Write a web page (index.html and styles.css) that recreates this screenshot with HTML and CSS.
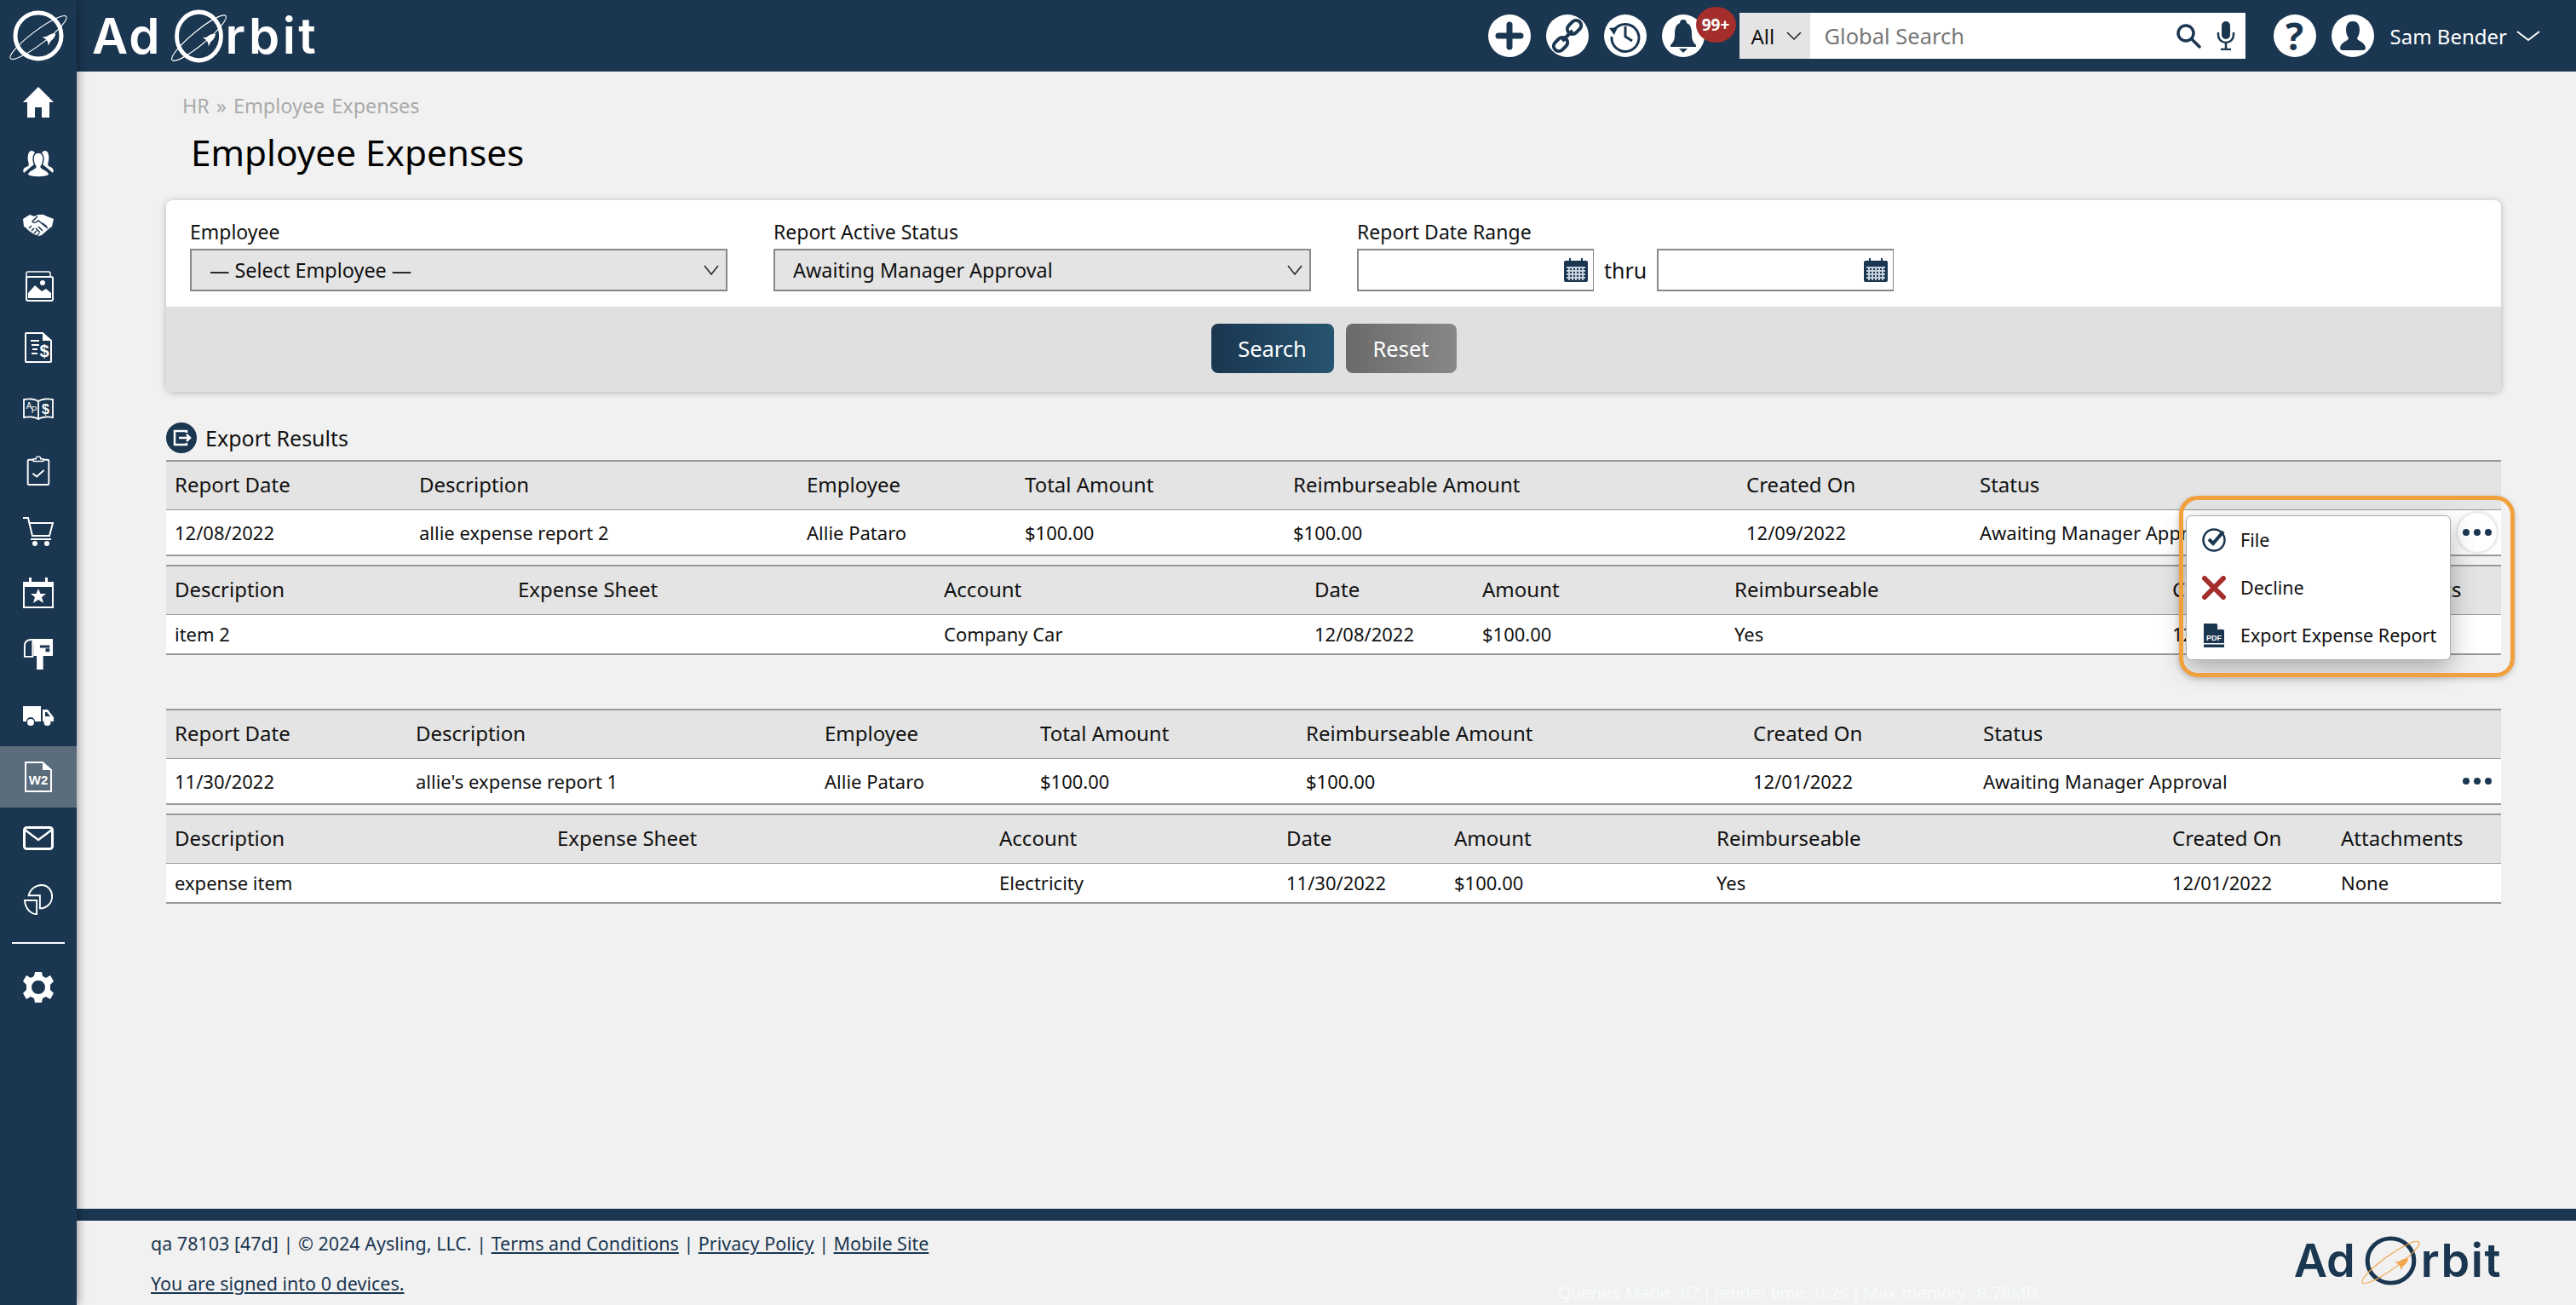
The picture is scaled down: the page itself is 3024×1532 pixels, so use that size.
FILE: index.html
```html
<!DOCTYPE html>
<html lang="en">
<head>
    <meta charset="UTF-8">
    <title>Employee Expenses</title>
    <link rel="stylesheet" href="styles.css">
</head>
<body>
    <svg class="sprite" aria-hidden="true">
        <symbol id="orbit" viewBox="0 0 80 64" preserveAspectRatio="none">
            <circle class="ring" cx="40" cy="32" r="27"/>
            <ellipse class="orbit-line" cx="40" cy="34" rx="41" ry="8" transform="rotate(-37 40 34)"/>
            <g class="orbit-rocket" transform="translate(53 35) rotate(53)">
                <path d="M0 -9C4 -5 4 0 3 4L-3 4C-4 0 -4 -5 0 -9Z"/>
                <path d="M-3 0L-6 6L-2 4ZM3 0L6 6L2 4Z"/>
            </g>
        </symbol>
        <symbol id="calendar" viewBox="0 0 28 28">
            <rect x="6" y="0" width="2" height="6" fill="#1a3650"/>
            <rect x="20" y="0" width="2" height="6" fill="#1a3650"/>
            <rect x="0" y="3" width="28" height="25" rx="2" fill="#1a3650"/>
            <path d="M3 11H25M3 15H25M3 19H25M3 23H25M6 10V26M10 10V26M14 10V26M18 10V26M22 10V26" stroke="#c4d0da" stroke-width="2"/>
        </symbol>
    </svg>

    <aside class="sidebar">
        <div class="side-logo">
            <svg class="logo-mark" width="80" height="64"><use href="#orbit"/></svg>
        </div>
        <nav class="side-nav">
            <a class="nav-item">
                <svg viewBox="0 0 36 36" class="nav-icon"><path fill="#fff" d="M18 0L36 18H31V36H22V24H14V36H5V18H0Z"/></svg>
            </a>
            <a class="nav-item">
                <svg viewBox="0 0 36 32" class="nav-icon">
                    <path fill="#fff" d="M10 1C14 1 15 5 15 9C15 13 13 15 13 17L8 21L1 27C-1 23 1 21 6 19C7 18 7 16 6 13C5 8 6 1 10 1Z"/>
                    <path fill="#fff" d="M26 1C22 1 21 5 21 9C21 13 23 15 23 17L28 21L35 27C37 23 35 21 30 19C29 18 29 16 30 13C31 8 30 1 26 1Z"/>
                    <path fill="#fff" stroke="#1a3650" stroke-width="1.500" d="M18 3C23 3 24 8 24 11C24 15 22 18 21 20C22 23 30 23 31 29C29 31 24 32 18 32C12 32 7 31 5 29C6 23 14 23 15 20C14 18 12 15 12 11C12 8 13 3 18 3Z"/>
                </svg>
            </a>
            <a class="nav-item">
                <svg viewBox="0 0 36 26" class="nav-icon">
                    <path fill="#fff" d="M0 6L8 1L13 3L18 1L24 1L28 3L36 6L34 15L31 17L22 25L19 26L16 25L13 24L10 22L7 20L3 16L1 15Z"/>
                    <path fill="none" stroke="#1a3650" stroke-width="1.500" d="M17 3L11 9C12 11 15 11 18 8L29 17M7 17L10 14M10 20L13 17M13 23L16 20M17 25L19 23M23 11L28 15M18 15L23 20M15 17L20 22"/>
                </svg>
            </a>
            <a class="nav-item">
                <svg viewBox="0 0 36 36" class="nav-icon">
                    <path fill="none" stroke="#fff" stroke-width="1.500" d="M4 26V3C4 2 5 1 6 1H30C31 1 32 2 32 3V6"/>
                    <rect x="4" y="7" width="31" height="28" rx="2" fill="#1a3650" stroke="#fff" stroke-width="2"/>
                    <path fill="#fff" d="M6 32V26L14 17L22 24L27 21L33 26V32Z"/>
                    <circle cx="23" cy="14" r="3" fill="#fff"/>
                </svg>
            </a>
            <a class="nav-item">
                <svg viewBox="0 0 32 36" class="nav-icon">
                    <path fill="none" stroke="#fff" stroke-width="2" d="M2 1H21L31 10V34C31 34.500 30.500 35 30 35H2C1.500 35 1 34.500 1 34V2C1 1.500 1.500 1 2 1Z"/>
                    <path fill="#fff" d="M21 1L31 10H21Z"/>
                    <path stroke="#fff" stroke-width="2" d="M7 10H17M8 15H17M9 20H15M8 25H15"/>
                    <text x="23" y="29" class="nav-glyph nav-dollar">$</text>
                </svg>
            </a>
            <a class="nav-item">
                <svg viewBox="0 0 36 26" class="nav-icon">
                    <path fill="none" stroke="#fff" stroke-width="1.800" d="M18 4C14 1 6 1 1 2V23C6 22 14 22 18 25C22 22 30 22 35 23V2C30 1 22 1 18 4ZM18 4V25"/>
                    <text x="7" y="13" class="nav-glyph nav-small">A</text>
                    <text x="13" y="18" class="nav-glyph nav-small">P</text>
                    <text x="26.500" y="19" class="nav-glyph nav-money">$</text>
                </svg>
            </a>
            <a class="nav-item">
                <svg viewBox="0 0 28 38" class="nav-icon">
                    <rect x="1" y="6" width="26" height="31" rx="1.500" fill="none" stroke="#fff" stroke-width="2"/>
                    <path fill="#1a3650" stroke="#fff" stroke-width="1.500" d="M8 8V5H11C11 1 17 1 17 5H20V8Z"/>
                    <path fill="none" stroke="#fff" stroke-width="2" d="M7 23L12 27L21 19"/>
                </svg>
            </a>
            <a class="nav-item">
                <svg viewBox="0 0 36 34" class="nav-icon">
                    <path fill="none" stroke="#fff" stroke-width="2" d="M0 1H6L11 22H31L35 7H8"/>
                    <path fill="none" stroke="#fff" stroke-width="2" d="M9 26H33"/>
                    <circle cx="14" cy="31" r="3" fill="#fff"/>
                    <circle cx="28" cy="31" r="3" fill="#fff"/>
                </svg>
            </a>
            <a class="nav-item">
                <svg viewBox="0 0 36 36" class="nav-icon">
                    <rect x="1" y="6" width="34" height="29" fill="none" stroke="#fff" stroke-width="2"/>
                    <path fill="#fff" d="M0 5H36V11H0ZM7 0H10V6H7ZM26 0H29V6H26Z"/>
                    <path fill="#fff" d="M18 13L20.500 19H27L22 23L24 30L18 26L12 30L14 23L9 19H15.500Z"/>
                </svg>
            </a>
            <a class="nav-item">
                <svg viewBox="0 0 36 38" class="nav-icon">
                    <path fill="none" stroke="#fff" stroke-width="2" d="M1 22V9C1 4 4 1 9 1H14C10 1 11 5 11 9V22Z"/>
                    <path fill="#fff" fill-rule="evenodd" d="M9 0H36V21H24V38H16V21H12V9C12 5 11 2 9 0ZM20 8V11H32V8ZM27 12V16H32V12Z"/>
                </svg>
            </a>
            <a class="nav-item">
                <svg viewBox="0 0 36 26" class="nav-icon">
                    <path fill="#fff" d="M0 2H21V20H14A5 5 0 0 0 4 20H1C0.500 20 0 19.500 0 19Z"/>
                    <path fill="#fff" fill-rule="evenodd" d="M23 6H29L36 15V20H33A5 5 0 0 0 24 20H23ZM26 9V14H32L28 9Z"/>
                    <circle cx="9" cy="21" r="4" fill="#fff"/>
                    <circle cx="28.500" cy="21" r="4" fill="#fff"/>
                </svg>
            </a>
            <a class="nav-item active">
                <svg viewBox="0 0 32 36" class="nav-icon">
                    <path fill="none" stroke="#fff" stroke-width="2" d="M1 1H21L31 10V35H1Z"/>
                    <path fill="#fff" d="M21 1L31 10H21Z"/>
                    <text x="16" y="27" class="nav-glyph nav-w2">W2</text>
                </svg>
            </a>
            <a class="nav-item">
                <svg viewBox="0 0 36 28" class="nav-icon">
                    <rect x="1.500" y="1.500" width="33" height="25" rx="3" fill="none" stroke="#fff" stroke-width="3"/>
                    <path fill="none" stroke="#fff" stroke-width="2.500" d="M2 4L18 16L34 4"/>
                </svg>
            </a>
            <a class="nav-item">
                <svg viewBox="0 0 36 38" class="nav-icon">
                    <path fill="none" stroke="#fff" stroke-width="2" d="M6 14C8 6 15 1 22 1C30 1 35 8 35 15C35 24 28 30 20 30V14Z"/>
                    <path fill="none" stroke="#fff" stroke-width="2" d="M1 20H16V37C8 37 2 30 1 20Z"/>
                </svg>
            </a>
            <div class="nav-divider"></div>
            <a class="nav-item">
                <svg viewBox="0 0 36 36" class="nav-icon">
                    <path fill="#fff" fill-rule="evenodd" d="M14 0H22L23 5L27 7L32 4L36 11L32 15V21L36 25L32 32L27 29L23 31L22 36H14L13 31L9 29L4 32L0 25L4 21V15L0 11L4 4L9 7L13 5ZM18 10A8 8 0 1 0 18 26A8 8 0 1 0 18 10Z"/>
                </svg>
            </a>
        </nav>
    </aside>

    <div class="page">
        <header class="topbar">
            <a class="brand brand-light">
                <span class="brand-ad">Ad</span>
                <svg class="brand-mark" width="80" height="64"><use href="#orbit"/></svg>
                <span class="brand-rest">rbit</span>
            </a>
            <div class="top-actions">
                <button class="round-btn">
                    <svg viewBox="0 0 50 50"><path stroke="#1a3650" stroke-width="7" stroke-linecap="round" d="M25 12V38M12 25H38"/></svg>
                </button>
                <button class="round-btn">
                    <svg viewBox="0 0 50 50"><g fill="none" stroke="#1a3650" stroke-width="4"><rect x="24" y="9" width="18" height="12" rx="6" transform="rotate(-45 33 15)"/><rect x="8" y="29" width="18" height="12" rx="6" transform="rotate(-45 17 35)"/><path d="M19 31L31 19"/></g></svg>
                </button>
                <button class="round-btn">
                    <svg viewBox="0 0 50 50"><g fill="none" stroke="#1a3650" stroke-width="3"><path d="M12 18A16 16 0 1 1 9 26"/><path stroke-width="3" d="M25 14V26L33 31"/></g><path fill="#1a3650" d="M6 16L16 15L12 24Z"/></svg>
                </button>
                <div class="bell-wrap">
                    <button class="round-btn">
                        <svg viewBox="0 0 50 50"><path fill="#1a3650" d="M25 6C28 6 29 8 29 10C34 12 35 17 35 24C35 30 37 33 40 36V38H10V36C13 33 15 30 15 24C15 17 16 12 21 10C21 8 22 6 25 6Z"/><path fill="#1a3650" d="M20 40H30L25 45Z"/></svg>
                    </button>
                    <span class="badge">99+</span>
                </div>
                <div class="global-search">
                    <div class="scope">
                        <span>All</span>
                        <svg width="18" height="10" viewBox="0 0 18 10"><path fill="none" stroke="#222" stroke-width="1.500" d="M1 1L9 9L17 1"/></svg>
                    </div>
                    <div class="search-field">
                        <span class="placeholder">Global Search</span>
                        <svg class="search-icon" viewBox="0 0 30 30"><circle cx="12" cy="12" r="9" fill="none" stroke="#1a3650" stroke-width="3.500"/><path stroke="#1a3650" stroke-width="3.500" stroke-linecap="round" d="M19 19L28 28"/></svg>
                        <svg class="mic-icon" viewBox="0 0 22 34"><rect x="6" y="0" width="10" height="21" rx="5" fill="#1a3650"/><path fill="none" stroke="#1a3650" stroke-width="2.500" d="M2 13V16C2 21 6 25 11 25C16 25 20 21 20 16V13M11 25V32M5 33H17"/></svg>
                    </div>
                </div>
                <button class="round-btn help-btn">?</button>
                <button class="round-btn user-btn">
                    <svg viewBox="0 0 50 50"><path fill="#1a3650" d="M25 8C31 8 33 13 33 18C33 23 31 26 30 28C30 31 39 32 40 39C40 41 39 42 37 42H13C11 42 10 41 10 39C11 32 20 31 20 28C19 26 17 23 17 18C17 13 19 8 25 8Z"/></svg>
                </button>
                <div class="user-menu">
                    <span>Sam Bender</span>
                    <svg width="28" height="14" viewBox="0 0 28 14"><path fill="none" stroke="#fff" stroke-width="2" d="M1 2L14 12L27 2"/></svg>
                </div>
            </div>
        </header>

        <main class="main">
            <div class="breadcrumb">HR » Employee Expenses</div>
            <h1 class="page-title">Employee Expenses</h1>

            <section class="filter-card">
                <div class="filter-fields">
                    <div class="field field-wide">
                        <label for="employee">Employee</label>
                        <select id="employee"><option>— Select Employee —</option></select>
                    </div>
                    <div class="field field-wide">
                        <label for="active">Report Active Status</label>
                        <select id="active"><option>Awaiting Manager Approval</option></select>
                    </div>
                    <div class="field">
                        <label>Report Date Range</label>
                        <div class="date-range">
                            <div class="date-input"><svg class="cal-icon"><use href="#calendar"/></svg></div>
                            <span>thru</span>
                            <div class="date-input"><svg class="cal-icon"><use href="#calendar"/></svg></div>
                        </div>
                    </div>
                </div>
                <div class="filter-actions">
                    <button class="btn btn-search">Search</button>
                    <button class="btn btn-reset">Reset</button>
                </div>
            </section>

            <div class="export-link">
                <svg class="export-icon" viewBox="0 0 36 36">
                    <circle cx="18" cy="18" r="18" fill="#1a3650"/>
                    <path fill="none" stroke="#fff" stroke-width="2.500" d="M24 12V10H10V26H24V24"/>
                    <path fill="none" stroke="#fff" stroke-width="2.500" d="M15 18H28M24 14L28 18L24 22"/>
                </svg>
                <span>Export Results</span>
            </div>

            <section class="report">
                <table class="grid report-one">
                    <colgroup><col><col><col><col><col><col><col><col></colgroup>
                    <thead>
                        <tr><th>Report Date</th><th>Description</th><th>Employee</th><th>Total Amount</th><th>Reimburseable Amount</th><th>Created On</th><th>Status</th><th></th></tr>
                    </thead>
                    <tbody>
                        <tr class="report-row">
                            <td>12/08/2022</td><td>allie expense report 2</td><td>Allie Pataro</td><td>$100.00</td><td>$100.00</td><td>12/09/2022</td><td>Awaiting Manager Approval</td>
                            <td class="actions-cell">
                                <button class="dots dots-open"><i></i><i></i><i></i></button>
                                <div class="highlight"></div>
                                <div class="row-menu">
                                    <a class="menu-item">
                                        <svg viewBox="0 0 28 28" class="menu-icon"><circle cx="14" cy="14" r="12.500" fill="none" stroke="#1a3650" stroke-width="2.500"/><path fill="none" stroke="#1a3650" stroke-width="4" d="M8 13L13 18L25 4"/></svg>
                                        <span>File</span>
                                    </a>
                                    <a class="menu-item">
                                        <svg viewBox="0 0 28 28" class="menu-icon"><path stroke="#a32e2b" stroke-width="6" stroke-linecap="round" d="M3 3L25 25M25 3L3 25"/></svg>
                                        <span>Decline</span>
                                    </a>
                                    <a class="menu-item">
                                        <svg viewBox="0 0 28 28" class="menu-icon"><path fill="#1a3650" d="M2 0H17L26 8V28H2Z"/><path fill="#fff" d="M18 0L26 7H18Z" opacity=".9"/><rect x="2" y="23" width="24" height="1.500" fill="#fff"/><text x="14" y="20" class="pdf-label">PDF</text></svg>
                                        <span>Export Expense Report</span>
                                    </a>
                                </div>
                            </td>
                        </tr>
                    </tbody>
                </table>
                <table class="grid items-one">
                    <colgroup><col><col><col><col><col><col><col><col></colgroup>
                    <thead>
                        <tr><th>Description</th><th>Expense Sheet</th><th>Account</th><th>Date</th><th>Amount</th><th>Reimburseable</th><th>Created On</th><th>Attachments</th></tr>
                    </thead>
                    <tbody>
                        <tr><td>item 2</td><td></td><td>Company Car</td><td>12/08/2022</td><td>$100.00</td><td>Yes</td><td>12/09/2022</td><td>None</td></tr>
                    </tbody>
                </table>
            </section>

            <section class="report">
                <table class="grid report-two">
                    <colgroup><col><col><col><col><col><col><col><col></colgroup>
                    <thead>
                        <tr><th>Report Date</th><th>Description</th><th>Employee</th><th>Total Amount</th><th>Reimburseable Amount</th><th>Created On</th><th>Status</th><th></th></tr>
                    </thead>
                    <tbody>
                        <tr class="report-row">
                            <td>11/30/2022</td><td>allie's expense report 1</td><td>Allie Pataro</td><td>$100.00</td><td>$100.00</td><td>12/01/2022</td><td>Awaiting Manager Approval</td>
                            <td class="actions-cell"><button class="dots"><i></i><i></i><i></i></button></td>
                        </tr>
                    </tbody>
                </table>
                <table class="grid items-two">
                    <colgroup><col><col><col><col><col><col><col><col></colgroup>
                    <thead>
                        <tr><th>Description</th><th>Expense Sheet</th><th>Account</th><th>Date</th><th>Amount</th><th>Reimburseable</th><th>Created On</th><th>Attachments</th></tr>
                    </thead>
                    <tbody>
                        <tr><td>expense item</td><td></td><td>Electricity</td><td>11/30/2022</td><td>$100.00</td><td>Yes</td><td>12/01/2022</td><td>None</td></tr>
                    </tbody>
                </table>
            </section>
        </main>

        <footer class="footer">
            <div class="footer-body">
                <div class="footer-links">
                    <p>qa 78103 [47d] | © 2024 Aysling, LLC. | <a>Terms and Conditions</a> | <a>Privacy Policy</a> | <a>Mobile Site</a></p>
                    <p class="devices"><a>You are signed into 0 devices.</a></p>
                </div>
                <div class="debug-line">Queries Made: 67 | render time: 0.2s | Max memory: 8.78MB</div>
                <a class="brand brand-dark">
                    <span class="brand-ad">Ad</span>
                    <svg class="brand-mark" width="80" height="64"><use href="#orbit"/></svg>
                    <span class="brand-rest">rbit</span>
                </a>
            </div>
        </footer>
    </div>
</body>
</html>
```

FILE: styles.css
```css
* {
    margin: 0;
    padding: 0;
    box-sizing: border-box;
}

html,
body {
    height: 100%;
    overflow: hidden;
}

body {
    display: flex;
    font-family: "Noto Sans", sans-serif;
    font-size: 22px;
    background-color: #f1f1f1;
    color: #111;
}

.sprite {
    position: absolute;
    width: 0;
    height: 0;
}

.ring {
    fill: none;
    stroke: var(--ring, #fff);
    stroke-width: 5;
}

.orbit-line {
    fill: none;
    stroke: var(--orbit, #fff);
    stroke-width: 1.2;
}

.orbit-rocket {
    fill: var(--orbit, #fff);
}

/* Sidebar */
.sidebar {
    position: relative;
    z-index: 2;
    flex: 0 0 90px;
    background-color: #1a3650;
    box-shadow: 2px 0 10px rgba(0, 0, 0, 0.35);
}

.side-logo {
    height: 84px;
    display: flex;
    align-items: center;
    justify-content: center;
}

.logo-mark {
    display: block;
}

.nav-item {
    height: 72px;
    display: flex;
    align-items: center;
    justify-content: center;
}

.nav-item.active {
    background-color: #5b6c7d;
}

.nav-icon {
    width: 36px;
    height: 36px;
    overflow: visible;
}

.nav-glyph {
    fill: #fff;
    font-family: "Liberation Sans", sans-serif;
    font-weight: 700;
    text-anchor: middle;
}

.nav-dollar {
    font-size: 20px;
}

.nav-small {
    font-size: 10px;
    font-weight: 400;
}

.nav-money {
    font-size: 16px;
}

.nav-w2 {
    font-size: 15px;
}

.nav-divider {
    height: 2px;
    margin: 14px 14px 15px;
    background-color: #fff;
}

/* Top bar */
.page {
    flex: 1;
    min-width: 0;
    display: flex;
    flex-direction: column;
}

.topbar {
    flex: 0 0 84px;
    display: flex;
    align-items: center;
    justify-content: space-between;
    background-color: #1a3650;
    padding-left: 18px;
}

.brand {
    display: flex;
    align-items: center;
    font-family: Inter, sans-serif;
    font-weight: 600;
    line-height: 1;
    text-decoration: none;
}

.brand-light {
    color: #fff;
    font-size: 58px;
}

.brand-light .brand-ad {
    letter-spacing: 2px;
}

.brand-light .brand-rest {
    letter-spacing: 3.5px;
}

.brand-light .brand-mark {
    width: 77px;
    height: 67px;
    margin: 0 -7px 0 5px;
}

.brand-dark {
    color: #1a3650;
    font-size: 54px;
    --ring: #1a3650;
    --orbit: #f0a64a;
}

.brand-dark .brand-rest {
    letter-spacing: 1.5px;
}

.brand-dark .brand-mark {
    width: 81px;
    height: 62px;
    margin: 0 -5px 0 1px;
}

.top-actions {
    display: flex;
    align-items: center;
    padding-right: 42px;
}

.round-btn {
    width: 50px;
    height: 50px;
    border: none;
    border-radius: 50%;
    background-color: #fff;
    color: #1a3650;
    margin-right: 18px;
    display: flex;
    align-items: center;
    justify-content: center;
}

.round-btn svg {
    width: 50px;
    height: 50px;
}

.user-btn {
    margin-right: 19px;
}

.bell-wrap {
    position: relative;
    display: flex;
}

.bell-wrap .round-btn {
    margin-right: 41px;
}

.badge {
    position: absolute;
    left: 40px;
    top: -9px;
    width: 47px;
    height: 42px;
    border-radius: 50%;
    background-color: #a32e2b;
    color: #fff;
    font-size: 19px;
    font-weight: 700;
    text-align: center;
    line-height: 42px;
}

.global-search {
    display: flex;
    height: 54px;
    margin-right: 33px;
}

.scope {
    width: 83px;
    display: flex;
    align-items: center;
    gap: 14px;
    padding-left: 14px;
    background-color: #e4e4e4;
    font-size: 24px;
}

.search-field {
    width: 511px;
    display: flex;
    align-items: center;
    padding: 0 12px 0 17px;
    background-color: #fff;
}

.placeholder {
    flex: 1;
    color: #777;
    font-size: 25.5px;
}

.search-icon {
    width: 30px;
    height: 30px;
    margin-right: 18px;
}

.mic-icon {
    width: 22px;
    height: 34px;
}

.help-btn {
    font-family: "Noto Sans", sans-serif;
    font-size: 44px;
    font-weight: 700;
    line-height: 1;
}

.user-menu {
    display: flex;
    align-items: center;
    gap: 11px;
    color: #fff;
    font-size: 24px;
}

/* Page head */
.main {
    flex: 1;
    padding: 23px 88px 0 105px;
}

.breadcrumb {
    height: 34px;
    line-height: 34px;
    padding-left: 19px;
    color: #aaa;
    font-size: 23.4px;
    word-spacing: 2px;
}

.page-title {
    margin-top: 8px;
    height: 60px;
    line-height: 60px;
    padding-left: 29px;
    font-size: 42.3px;
    font-weight: 400;
    color: #000;
}

/* Filter card */
.filter-card {
    margin-top: 26px;
    border-radius: 8px;
    overflow: hidden;
    background-color: #fff;
    box-shadow: 0 1px 8px rgba(0, 0, 0, 0.25);
}

.filter-fields {
    height: 125px;
    display: flex;
    gap: 54px;
    padding: 21px 28px 0;
}

.field label {
    display: block;
    height: 32px;
    line-height: 32px;
    margin-bottom: 4px;
    font-size: 23px;
}

.field-wide {
    width: 631px;
}

.field select {
    width: 100%;
    height: 50px;
    padding-left: 21px;
    appearance: none;
    border: 2px solid #888;
    border-radius: 0;
    background-color: #e4e4e4;
    background-image: url("data:image/svg+xml,%3Csvg xmlns='http://www.w3.org/2000/svg' width='18' height='12' viewBox='0 0 18 12'%3E%3Cpath fill='none' stroke='%23222' stroke-width='1.500' d='M1 1l8 10 8-10'/%3E%3C/svg%3E");
    background-repeat: no-repeat;
    background-position: right 8px center;
    font-family: inherit;
    font-size: 23.4px;
    color: #111;
}

.date-range {
    display: flex;
    align-items: center;
    gap: 12px;
    font-size: 25px;
}

.date-input {
    width: 278px;
    height: 50px;
    display: flex;
    align-items: center;
    justify-content: flex-end;
    padding: 0 6px 0 0;
    background-color: #fff;
    border: 2px solid #888;
    border-right-width: 1px;
}

.cal-icon {
    width: 28px;
    height: 28px;
}

.filter-actions {
    height: 100px;
    display: flex;
    align-items: center;
    justify-content: center;
    gap: 14px;
    padding-bottom: 2px;
    background-color: #e0e0e0;
}

.btn {
    height: 58px;
    border: none;
    border-radius: 8px;
    color: #fff;
    font-family: inherit;
    font-size: 25.5px;
}

.btn-search {
    width: 144px;
    background: linear-gradient(to right, #1a3650, #275470);
}

.btn-reset {
    width: 130px;
    background: linear-gradient(to right, #6a6a6a, #888);
}

/* Results */
.export-link {
    margin-top: 36px;
    height: 36px;
    display: flex;
    align-items: center;
    gap: 10px;
    font-size: 25px;
}

.export-icon {
    width: 36px;
    height: 36px;
}

.report {
    margin-top: 8px;
    margin-bottom: 63px;
}

.report + .report {
    margin-top: 0;
}

.grid {
    width: 100%;
    table-layout: fixed;
    border-collapse: collapse;
    margin-bottom: 10px;
}

.grid:last-child {
    margin-bottom: 0;
}

.grid th {
    height: 57px;
    padding: 0 10px 2px;
    text-align: left;
    font-size: 24px;
    font-weight: 400;
    background-color: #e4e4e4;
    border-top: 2px solid #999;
    border-bottom: 1px solid #999;
}

.grid td {
    height: 47px;
    padding: 0 10px;
    background-color: #fff;
    border-bottom: 2px solid #999;
    white-space: nowrap;
}

.grid .report-row td {
    height: 54px;
}

.report-one col:nth-child(1) { width: 287px; }
.report-one col:nth-child(2) { width: 455px; }
.report-one col:nth-child(3) { width: 256px; }
.report-one col:nth-child(4) { width: 315px; }
.report-one col:nth-child(5) { width: 532px; }
.report-one col:nth-child(6) { width: 274px; }
.report-one col:nth-child(7) { width: 562px; }

.report-two col:nth-child(1) { width: 283px; }
.report-two col:nth-child(2) { width: 480px; }
.report-two col:nth-child(3) { width: 253px; }
.report-two col:nth-child(4) { width: 312px; }
.report-two col:nth-child(5) { width: 525px; }
.report-two col:nth-child(6) { width: 270px; }
.report-two col:nth-child(7) { width: 558px; }

.items-one col:nth-child(1) { width: 403px; }
.items-one col:nth-child(2) { width: 500px; }
.items-one col:nth-child(3) { width: 435px; }
.items-one col:nth-child(4) { width: 197px; }
.items-one col:nth-child(5) { width: 296px; }
.items-one col:nth-child(6) { width: 514px; }
.items-one col:nth-child(7) { width: 196px; }

.items-two col:nth-child(1) { width: 449px; }
.items-two col:nth-child(2) { width: 519px; }
.items-two col:nth-child(3) { width: 337px; }
.items-two col:nth-child(4) { width: 197px; }
.items-two col:nth-child(5) { width: 308px; }
.items-two col:nth-child(6) { width: 535px; }
.items-two col:nth-child(7) { width: 198px; }

/* Row actions */
.grid .actions-cell {
    position: relative;
    padding: 0;
}

.dots {
    width: 46px;
    height: 46px;
    margin-left: 9px;
    display: flex;
    align-items: center;
    justify-content: center;
    gap: 5px;
    border: none;
    border-radius: 50%;
    background: none;
}

.dots i {
    width: 8px;
    height: 8px;
    border-radius: 50%;
    background-color: #1a3650;
}

.dots-open {
    background-color: #fff;
    box-shadow: 0 0 5px rgba(0, 0, 0, 0.25);
}

.row-menu {
    position: absolute;
    top: 6px;
    right: 59px;
    width: 311px;
    height: 170px;
    font-size: 21.5px;
    background-color: #fff;
    border: 1px solid #aaa;
    border-radius: 6px;
    box-shadow: 0 10px 30px rgba(0, 0, 0, 0.3);
}

.menu-item {
    height: 56px;
    display: flex;
    align-items: center;
    gap: 17px;
    padding-left: 18px;
}

.menu-icon {
    flex: 0 0 28px;
    height: 28px;
}

.pdf-label {
    fill: #fff;
    font-family: "Liberation Sans", sans-serif;
    font-size: 9px;
    font-weight: 700;
    text-anchor: middle;
}

.highlight {
    position: absolute;
    top: -17px;
    right: -16px;
    width: 394px;
    height: 213px;
    border: 5px solid #f0a03c;
    border-radius: 22px;
    box-shadow: 0 2px 6px rgba(0, 0, 0, 0.2);
    z-index: 1;
    pointer-events: none;
}

/* Footer */
.footer {
    border-top: 14px solid #1a3650;
    flex: 0 0 113px;
}

.footer-body {
    height: 99px;
    display: grid;
    grid-template-columns: 1fr auto auto;
    padding: 0 87px;
    color: #1a3650;
}

.footer-links {
    padding-top: 11px;
    font-size: 21.5px;
    line-height: 32px;
}

.footer-links a {
    text-decoration: underline;
}

.devices {
    margin-top: 15px;
}

.debug-line {
    align-self: end;
    margin-right: 300px;
    padding-bottom: 2px;
    font-family: "Liberation Sans", sans-serif;
    font-size: 21px;
    color: #f6fbfb;
}

.brand-dark {
    align-self: start;
    margin-top: 16px;
}
```
